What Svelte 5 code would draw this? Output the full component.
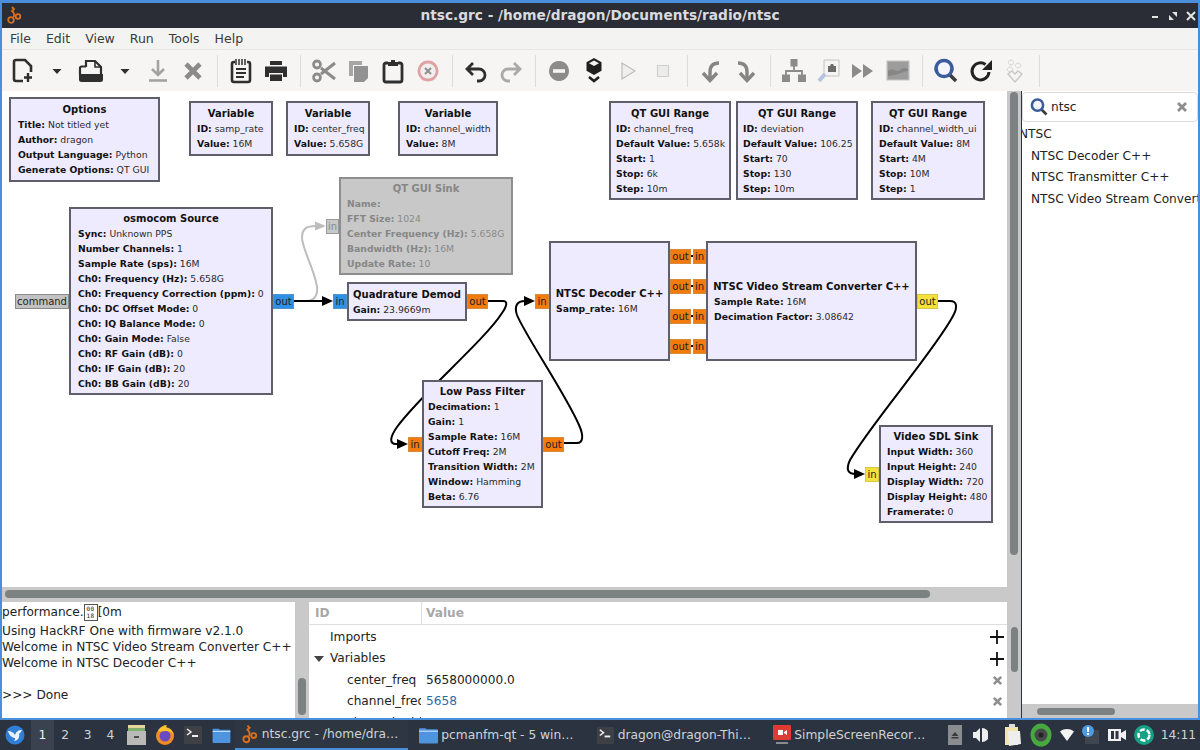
<script>
  const G = '#8b8b8b';
  const K = '#2f2f2f';

  // toolbar icons, drawn in a 24x24 box
  const tools = [
    { w: 34.5, paths: [
      { d: 'M12 22H5a2 2 0 0 1-2-2V3a2 2 0 0 1 2-2h9l6 6v6', s: K, sw: 2.6 },
      { d: 'M17 14v9M13 18.5h8', s: K, sw: 2.4 } ] },
    { w: 33, paths: [{ d: 'M7.5 10h9L12 15z', f: K }] },
    { w: 34.5, paths: [
      { d: 'M7 8V2h9l6 6v8', s: K, sw: 2.2 },
      { d: 'M16 2v6h6', s: K, sw: 1.6 },
      { d: 'M1 16V9a1.5 1.5 0 0 1 1.5-1.5H7', s: K, sw: 2.2 },
      { d: 'M0 15h24v5.5a2.5 2.5 0 0 1-2.5 2.5h-19A2.5 2.5 0 0 1 0 20.5z', f: K } ] },
    { w: 33, paths: [{ d: 'M7.5 10h9L12 15z', f: K }] },
    { w: 34.5, paths: [
      { d: 'M12 1v15M6 10l6 6 6-6', s: '#a3a3a3', sw: 2.6 },
      { d: 'M3 21.5h18', s: '#a3a3a3', sw: 2.6 } ] },
    { w: 34.5, paths: [{ d: 'M5 5l14 14M19 5L5 19', s: G, sw: 4.6 }] },
    'sep',
    { w: 34.5, paths: [
      { d: 'M6 3H5a2 2 0 0 0-2 2v16a2 2 0 0 0 2 2h14a2 2 0 0 0 2-2V5a2 2 0 0 0-2-2h-1', s: K, sw: 2.6 },
      { d: 'M7 0v6M10 0v6M13 0v6M16 0v6', s: K, sw: 1.5 },
      { d: 'M7 10h10M7 14h10M7 18h8', s: K, sw: 2 } ] },
    { w: 34.5, paths: [
      { d: 'M6 2h12v4H6zM1 7.5h22V18h-4v-4H5v4H1zM6 15.5h12V22H6z', f: K } ] },
    'sep',
    { w: 34.5, paths: [
      { d: 'M9 9L23 20M9 15L23 4', s: G, sw: 3 },
      { d: 'M5 2a3.5 3.5 0 1 0 .01 0M5 15a3.5 3.5 0 1 0 .01 0', s: G, sw: 2.8 } ] },
    { w: 34.5, paths: [
      { d: 'M2 2h13v4H6v11H2z', f: '#a6a6a6' },
      { d: 'M7 7h14v12l-4 4H7z', f: '#929292' } ] },
    { w: 34.5, paths: [
      { d: 'M7 4H5a2 2 0 0 0-2 2v15a2 2 0 0 0 2 2h14a2 2 0 0 0 2-2V6a2 2 0 0 0-2-2h-2', s: K, sw: 2.8 },
      { d: 'M7 7V3h3V1h4v2h3v4z', f: K } ] },
    { w: 34.5, paths: [
      { d: 'M12 3a9 9 0 1 0 .01 0', s: '#dfa3a6', sw: 2.8, f: '#f2eeee' },
      { d: 'M9 9l6 6M15 9l-6 6', s: '#8f8f8f', sw: 2 } ] },
    'sep',
    { w: 34.5, paths: [{ d: 'M9 4L3 10l6 6M3 10h12a6 6 0 0 1 0 12h-2', s: K, sw: 2.8 }] },
    { w: 34.5, paths: [{ d: 'M15 4l6 6-6 6M21 10H9a6 6 0 0 0 0 12h2', s: '#a9a9a9', sw: 2.8 }] },
    'sep',
    { w: 34.5, paths: [
      { d: 'M12 2a10 10 0 1 0 .01 0', f: G },
      { d: 'M6 10.2h12v3.6H6z', f: '#f5f5f5' } ] },
    { w: 34.5, paths: [
      { d: 'M12 -1l7.5 4.3v8.4L12 16l-7.5-4.3V3.3z', f: '#1f1f1f' },
      { d: 'M12 1.5l5 2.8-5 2.8-5-2.8z', f: '#f2f2f2' },
      { d: 'M7 18l5 4 5-4', s: '#1f1f1f', sw: 2.6 } ] },
    { w: 34.5, paths: [{ d: 'M6 4v16l13-8z', s: '#bcbcbc', sw: 1.2, f: '#efefef' }] },
    { w: 34.5, paths: [{ d: 'M6.5 6.5h11v11h-11z', s: '#cfcfcf', sw: 1.2, f: '#ececec' }] },
    'sep',
    { w: 34.5, paths: [
      { d: 'M20 4c-6 0-9 3-9 9v6', s: '#858585', sw: 3.4 },
      { d: 'M4 14l7 7.5 7-7.5', s: '#858585', sw: 3.4 } ] },
    { w: 34.5, paths: [
      { d: 'M4 4c6 0 9 3 9 9v6', s: '#858585', sw: 3.4 },
      { d: 'M6 14l7 7.5 7-7.5', s: '#858585', sw: 3.4 } ] },
    'sep',
    { w: 34.5, paths: [
      { d: 'M8.5 0h7v7.5h-7zM0 15.5h8V23H0zM16 15.5h8V23h-8z', f: G },
      { d: 'M12 7v5M4 16v-4h16v4', s: G, sw: 1.8 } ] },
    { w: 34.5, paths: [
      { d: 'M7 1h15v16H7z', s: '#c2c2c2', sw: 1, f: '#f4f4f4' },
      { d: 'M11 7h2l1-2h2l1 2h2v6h-8z', f: '#6b6b6b' },
      { d: 'M8 15l-6 7', s: '#b4c6de', sw: 4 } ] },
    { w: 34.5, paths: [{ d: 'M1 5v14l10-7zM12 5v14l10-7z', f: G }] },
    { w: 34.5, paths: [
      { d: 'M1 2h22v19H1z', s: '#c6c6c6', sw: 1.2, f: '#9c9c9c' },
      { d: 'M2 12c5-4 8 2 12-1s5-2 8-1v2c-6 1-14 5-20 5z', f: '#868686' } ] },
    'sep',
    { w: 34.5, paths: [
      { d: 'M15 15l7 7', s: '#3c3c3c', sw: 3.6 },
      { d: 'M10 1.5a8 8 0 1 0 .01 0', s: '#3b5b9c', sw: 3.4, f: '#f3f5fa' } ] },
    { w: 34.5, paths: [
      { d: 'M20 13a8.5 8.5 0 1 1-3.5-7.5', s: '#222', sw: 3 },
      { d: 'M23 1v10H13z', f: '#222' } ] },
    { w: 34.5, paths: [
      { d: 'M8 1a2.5 2.5 0 1 0 .01 0M15 4a2.5 2.5 0 1 0 .01 0M7 8a2.5 2.5 0 1 0 .01 0', s: '#d4d4d4', sw: 1 },
      { d: 'M5 15l4-3 3 3 3-3 4 3-7 8z', s: '#c8c8c8', sw: 1.4, f: '#f4f4f4' } ] },
    'sep'
  ];

  const blocks = [
    { x: 9, y: 97, w: 151, h: 85, pad: 9, title: 'Options', lines: [['Title', 'Not titled yet'], ['Author', 'dragon'], ['Output Language', 'Python'], ['Generate Options', 'QT GUI']] },
    { x: 189, y: 101, w: 84, h: 55, pad: 8, title: 'Variable', lines: [['ID', 'samp_rate'], ['Value', '16M']] },
    { x: 286, y: 101, w: 84, h: 55, pad: 8, title: 'Variable', lines: [['ID', 'center_freq'], ['Value', '5.658G']] },
    { x: 398, y: 101, w: 100, h: 55, pad: 8, title: 'Variable', lines: [['ID', 'channel_width'], ['Value', '8M']] },
    { x: 609, y: 101, w: 122, h: 99, pad: 7, title: 'QT GUI Range', lines: [['ID', 'channel_freq'], ['Default Value', '5.658k'], ['Start', '1'], ['Stop', '6k'], ['Step', '10m']] },
    { x: 736, y: 101, w: 122, h: 99, pad: 7, title: 'QT GUI Range', lines: [['ID', 'deviation'], ['Default Value', '106.25'], ['Start', '70'], ['Stop', '130'], ['Step', '10m']] },
    { x: 871, y: 101, w: 114, h: 99, pad: 8, title: 'QT GUI Range', lines: [['ID', 'channel_width_ui'], ['Default Value', '8M'], ['Start', '4M'], ['Stop', '10M'], ['Step', '1']] },
    { x: 339, y: 177, w: 174, h: 98, pad: 8, off: true, title: 'QT GUI Sink', lines: [['Name', ''], ['FFT Size', '1024'], ['Center Frequency (Hz)', '5.658G'], ['Bandwidth (Hz)', '16M'], ['Update Rate', '10']] },
    { x: 69, y: 207, w: 204, h: 188, pad: 9, title: 'osmocom Source', lines: [['Sync', 'Unknown PPS'], ['Number Channels', '1'], ['Sample Rate (sps)', '16M'], ['Ch0: Frequency (Hz)', '5.658G'], ['Ch0: Frequency Correction (ppm)', '0'], ['Ch0: DC Offset Mode', '0'], ['Ch0: IQ Balance Mode', '0'], ['Ch0: Gain Mode', 'False'], ['Ch0: RF Gain (dB)', '0'], ['Ch0: IF Gain (dB)', '20'], ['Ch0: BB Gain (dB)', '20']] },
    { x: 347, y: 282, w: 120, h: 39, pad: 6, title: 'Quadrature Demod', lines: [['Gain', '23.9669m']] },
    { x: 422, y: 380, w: 121, h: 128, pad: 6, title: 'Low Pass Filter', lines: [['Decimation', '1'], ['Gain', '1'], ['Sample Rate', '16M'], ['Cutoff Freq', '2M'], ['Transition Width', '2M'], ['Window', 'Hamming'], ['Beta', '6.76']] },
    { x: 549, y: 241, w: 121, h: 120, pad: 7, title: 'NTSC Decoder C++', lines: [['Samp_rate', '16M']] },
    { x: 706, y: 241, w: 211, h: 120, pad: 8, title: 'NTSC Video Stream Converter C++', lines: [['Sample Rate', '16M'], ['Decimation Factor', '3.08642']] },
    { x: 879, y: 425, w: 114, h: 98, pad: 8, title: 'Video SDL Sink', lines: [['Input Width', '360'], ['Input Height', '240'], ['Display Width', '720'], ['Display Height', '480'], ['Framerate', '0']] }
  ];

  const ports = [
    { x: 15, y: 294, w: 54, label: 'command', kind: 'msg' },
    { x: 273, y: 294, w: 21, label: 'out', kind: 'cplx' },
    { x: 326, y: 219, w: 13, label: 'in', kind: 'dis' },
    { x: 333, y: 294, w: 14, label: 'in', kind: 'cplx' },
    { x: 467, y: 294, w: 21, label: 'out', kind: 'flt' },
    { x: 408, y: 437, w: 14, label: 'in', kind: 'flt' },
    { x: 543, y: 437, w: 21, label: 'out', kind: 'flt' },
    { x: 535, y: 294, w: 14, label: 'in', kind: 'flt' },
    { x: 670, y: 249, w: 21, label: 'out', kind: 'flt' },
    { x: 670, y: 279, w: 21, label: 'out', kind: 'flt' },
    { x: 670, y: 309, w: 21, label: 'out', kind: 'flt' },
    { x: 670, y: 339, w: 21, label: 'out', kind: 'flt' },
    { x: 693, y: 249, w: 13, label: 'in', kind: 'flt' },
    { x: 693, y: 279, w: 13, label: 'in', kind: 'flt' },
    { x: 693, y: 309, w: 13, label: 'in', kind: 'flt' },
    { x: 693, y: 339, w: 13, label: 'in', kind: 'flt' },
    { x: 917, y: 294, w: 21, label: 'out', kind: 'byte' },
    { x: 865, y: 467, w: 14, label: 'in', kind: 'byte' }
  ];

  const tasks = [
    { text: 'ntsc.grc - /home/dra…', icon: 'gr', active: true },
    { text: 'pcmanfm-qt - 5 win…', icon: 'folder' },
    { text: 'dragon@dragon-Thi…', icon: 'term' },
    { text: 'SimpleScreenRecor…', icon: 'rec' }
  ];
</script>

{#snippet grLogo(size)}
  <svg width={size} height={size} viewBox="0 0 18 18" fill="none" stroke="#d9701f" stroke-width="1.8">
    <path d="M7 1l2 2-2 2 2 2" />
    <circle cx="6" cy="14" r="2.8" />
    <circle cx="13" cy="10.5" r="2.3" />
    <path d="M9 7v4" />
  </svg>
{/snippet}

{#snippet xIcon(size, color)}
  <svg width={size} height={size} viewBox="0 0 12 12"><path d="M2 2l8 8M10 2l-8 8" stroke={color} stroke-width="2.8" /></svg>
{/snippet}

{#snippet plusIcon()}
  <svg width="14" height="14" viewBox="0 0 14 14"><path d="M7 0v14M0 7h14" stroke="#111" stroke-width="1.8" /></svg>
{/snippet}

{#snippet termIcon(size)}
  <svg width={size} height={size} viewBox="0 0 18 18"><rect width="18" height="18" rx="1" fill="#3d4045" /><path d="M3 3l4 3-4 3" stroke="#eee" stroke-width="1.5" fill="none" /><path d="M8 10h6" stroke="#eee" stroke-width="2" /></svg>
{/snippet}

{#snippet folderIcon(w, h)}
  <svg width={w} height={h} viewBox="0 0 20 18"><path d="M0 3a1 1 0 0 1 1-1h6l1 1h11a1 1 0 0 1 1 1v13a1 1 0 0 1-1 1H1a1 1 0 0 1-1-1z" fill="#4f94df" /><path d="M0 5h20" stroke="#dcebfa" stroke-width="1" /></svg>
{/snippet}

<div class="window">
  <header class="titlebar">
    <span class="tlogo">{@render grLogo(18)}</span>
    <span class="ttext">ntsc.grc - /home/dragon/Documents/radio/ntsc</span>
    <span class="wbtns">
      <svg width="10" height="10" viewBox="0 0 10 10"><path d="M2 6h6" stroke="#e4e4e4" stroke-width="2" /></svg>
      <svg width="10" height="10" viewBox="0 0 10 10"><path d="M9 1v5L4 1zM1 9V4l5 5z" fill="#e4e4e4" /></svg>
      <svg width="10" height="10" viewBox="0 0 10 10"><path d="M1 1l8 8M9 1L1 9" stroke="#e4e4e4" stroke-width="2" /></svg>
    </span>
  </header>

  <nav class="menubar">
    <span>File</span><span>Edit</span><span>View</span><span>Run</span><span>Tools</span><span>Help</span>
  </nav>

  <div class="toolbar">
    {#each tools as t}
      {#if t === 'sep'}
        <i class="sep"></i>
      {:else}
        <span class="tool" style="width:{t.w}px">
          <svg width="24" height="24" viewBox="0 0 24 24" fill="none">
            {#each t.paths as p}
              <path d={p.d} fill={p.f || 'none'} stroke={p.s || 'none'} stroke-width={p.sw || 0} />
            {/each}
          </svg>
        </span>
      {/if}
    {/each}
  </div>

  <div class="main">
    <div class="leftcol">
      <div class="canvasrow">
        <div class="canvas">
          <svg class="wires" width="1005" height="496" viewBox="2 91 1005 496" fill="none">
            <path d="M294 301H306C316 301 319 293 316 282C312 265 303 250 302 238C302 229 306 226 316 226" stroke="#bdbdbd" stroke-width="2" />
            <path d="M315 221.5L326 226L315 230.5z" fill="#bdbdbd" />
            <path d="M294 301H323" stroke="#000" stroke-width="2" />
            <path d="M322 296L333 301L322 306z" fill="#000" />
            <path d="M488 301H503C508 301 507 306 502 313C485 340 420 395 397 427C390 437 389 444 396 444H399" stroke="#000" stroke-width="2" />
            <path d="M397 439L408 444L397 449z" fill="#000" />
            <path d="M564 443H577C583 443 584 436 579 425C565 393 525 335 517 315C514 306 517 301 525 301" stroke="#000" stroke-width="2" />
            <path d="M524 296L535 301L524 306z" fill="#000" />
            <path d="M938 301H950C957 301 958 307 953 316C935 350 870 425 850 460C846 469 847 474 856 474" stroke="#000" stroke-width="2" />
            <path d="M854 469L865 474L854 479z" fill="#000" />
            <path d="M691 256h2M691 286h2M691 316h2M691 346h2" stroke="#000" stroke-width="2" />
          </svg>

          {#each ports as p}
            <div class="port {p.kind}" style="left:{p.x - 2}px;top:{p.y - 91}px;width:{p.w}px">{p.label}</div>
          {/each}

          {#each blocks as b}
            <div class="block" class:off={b.off} style="left:{b.x - 2}px;top:{b.y - 91}px;width:{b.w}px;height:{b.h}px;padding-left:{b.pad - 2}px;padding-right:{b.pad - 2}px">
              <div class="btitle">{b.title}</div>
              {#each b.lines as l}
                <div class="bline"><b>{l[0]}:</b> {l[1]}</div>
              {/each}
            </div>
          {/each}
        </div>
        <div class="vscroll"><div class="vthumb"></div></div>
      </div>
      <div class="hscroll"><div class="hthumb"></div></div>

      <div class="lower">
        <div class="console">
          <div class="c1">performance.<span class="tofu"><span>00</span><span>18</span></span>[0m</div>
          <div>Using HackRF One with firmware v2.1.0</div>
          <div>Welcome in NTSC Video Stream Converter C++</div>
          <div>Welcome in NTSC Decoder C++</div>
          <div>&nbsp;</div>
          <div>&gt;&gt;&gt; Done</div>
        </div>
        <div class="cscroll"><div class="cthumb"></div></div>
        <div class="tree">
          <div class="thead">
            <div class="th idcol">ID</div>
            <div class="th">Value</div>
          </div>
          <div class="tbody">
            <div class="row"><span class="name l1">Imports</span><span class="act">{@render plusIcon()}</span></div>
            <div class="row"><i class="caret"></i><span class="name l1">Variables</span><span class="act">{@render plusIcon()}</span></div>
            <div class="row"><span class="name l2">center_freq</span><span class="val">5658000000.0</span><span class="act">{@render xIcon(11, '#8f8f8f')}</span></div>
            <div class="row"><span class="name l2">channel_freq</span><span class="val blue">5658</span><span class="act">{@render xIcon(11, '#8f8f8f')}</span></div>
            <div class="row"><span class="name l2">channel_width</span><span class="val blue">8000000</span><span class="act">{@render xIcon(11, '#8f8f8f')}</span></div>
          </div>
          <div class="tscroll"><div class="tthumb"></div></div>
        </div>
      </div>
    </div>

    <aside class="panel">
      <div class="search">
        <svg width="18" height="18" viewBox="0 0 24 24" fill="none"><path d="M15 15l7 7" stroke="#3c3c3c" stroke-width="3.6" /><circle cx="10" cy="9.5" r="7.5" stroke="#3b5b9c" stroke-width="3.4" fill="#f3f5fa" /></svg>
        <span class="q">ntsc</span>
        <span class="clear">{@render xIcon(12, '#8d8d8d')}</span>
      </div>
      <div class="list">
        <div class="cat">NTSC</div>
        <div class="item">NTSC Decoder C++</div>
        <div class="item">NTSC Transmitter C++</div>
        <div class="item">NTSC Video Stream Converter C++</div>
      </div>
      <div class="pscroll"><div class="pthumb"></div></div>
    </aside>
  </div>
</div>

<footer class="taskbar">
  <span class="start">
    <svg width="20" height="20" viewBox="0 0 20 20"><circle cx="10" cy="10" r="9.5" fill="#2f7fd6" /><path d="M3 6c3 0 5 1 7 4 1-3 3-5 7-5-1 2-2 3-3 4 1 3-1 7-5 7 1-1 1-2 1-3-3 0-6-3-7-7z" fill="#eaf3fc" /></svg>
  </span>
  <span class="desk on">1</span><span class="desk">2</span><span class="desk">3</span><span class="desk">4</span>
  <span class="launch">
    <svg width="19" height="20" viewBox="0 0 19 20"><path d="M1 0h17v3H1z" fill="#e4d69a" /><path d="M1 3h17v3H1z" fill="#7fae6f" /><path d="M0 6h19v14H0z" fill="#b9b9b7" /><path d="M7 11h5v2H7z" fill="#4b4b4b" /></svg>
  </span>
  <span class="launch">
    <svg width="20" height="20" viewBox="0 0 20 20"><circle cx="10" cy="11" r="9" fill="#f28b22" /><circle cx="10" cy="11" r="5.5" fill="#6a4bc4" /><path d="M3 6C5 1 10 0 12 0c-1 1-1 2 0 3 3 0 6 3 7 7-2-3-5-4-8-4-3 0-6 1-8 0z" fill="#f9c22e" /></svg>
  </span>
  <span class="launch">{@render termIcon(18)}</span>
  <span class="launch">{@render folderIcon(19, 16)}</span>

  <div class="tasks">
    {#each tasks as t}
      <div class="task" class:active={t.active}>
        <span class="ticon">
          {#if t.icon === 'gr'}
            {@render grLogo(20)}
          {:else if t.icon === 'folder'}
            {@render folderIcon(19, 18)}
          {:else if t.icon === 'term'}
            {@render termIcon(17)}
          {:else}
            <svg width="18" height="20" viewBox="0 0 18 20"><rect width="18" height="15" rx="1" fill="#df3b35" /><path d="M5 5h5v5H5zM11 7l3-2v5l-3-2z" fill="#fff" /><path d="M3 18h12" stroke="#aaa" stroke-width="1.5" /></svg>
          {/if}
        </span>
        <span class="ttl">{t.text}</span>
      </div>
    {/each}
  </div>

  <div class="tray">
    <span class="eject"><svg width="8" height="8" viewBox="0 0 8 8"><path d="M4 1l3.5 4h-7zM.5 6h7v1.5h-7z" fill="#3a3a3a" /></svg></span>
    <span class="cell w38"><svg width="15" height="16" viewBox="0 0 15 16"><path d="M0 5h3l4-4v14l-4-4H0z" fill="#eee" /><path d="M9 1a7 7 0 0 1 0 14z" fill="#eee" /></svg></span>
    <span class="cell w26"><svg width="17" height="22" viewBox="0 0 17 22"><path d="M1 3h13v18H1z" fill="#f2e7a6" /><path d="M5 0h6v4H5z" fill="#ddd" /><path d="M4 7h12l1 13-12 2z" fill="#eee" /></svg></span>
    <span class="cell w30"><svg width="22" height="24" viewBox="0 0 22 24"><ellipse cx="11" cy="12" rx="10.5" ry="11.5" fill="#46a83f" /><circle cx="11" cy="12" r="6.5" fill="#45494a" /><circle cx="11" cy="12" r="2.5" fill="#222" /></svg></span>
    <span class="cell w22"><svg width="14" height="12" viewBox="0 0 14 12"><path d="M0 2.5C4-.8 10-.8 14 2.5L7 12z" fill="#f4f4f4" /></svg></span>
    <span class="cell w24"><svg width="18" height="20" viewBox="0 0 18 20"><path d="M4 5h14v14H4z" fill="#3f4650" /><circle cx="7" cy="6" r="6" fill="#4f9be3" /><path d="M6 2h2v5H6zM6 8h2v2H6z" fill="#fff" /></svg></span>
    <span class="cell w30"><svg width="18" height="12" viewBox="0 0 18 12"><path d="M0 0h13v12H0z" fill="#f2f2f2" /><path d="M3 2h3v8H3zM7.5 2h3v8h-3z" fill="#2d3540" /><path d="M13 4l5-3v10l-5-3z" fill="#f2f2f2" /></svg></span>
    <span class="cell w24"><svg width="20" height="20" viewBox="0 0 20 20"><circle cx="10" cy="10" r="10" fill="#16a085" /><circle cx="10" cy="10" r="5.5" fill="none" stroke="#fff" stroke-width="2.5" stroke-dasharray="5 2" /></svg></span>
    <span class="clock">14:11</span>
  </div>
</footer>

<style>
  :global(body) {
    margin: 0;
    background: #2b3340;
    font-family: "DejaVu Sans", sans-serif;
  }

  .window {
    height: 720px;
    box-sizing: border-box;
    border: 2px solid #4a8fdb;
    border-top-width: 3px;
    display: flex;
    flex-direction: column;
    overflow: hidden;
  }

  .titlebar {
    height: 25px;
    flex: none;
    background: #2a2d36;
    display: flex;
    align-items: center;
    justify-content: center;
    position: relative;
    color: #d9dbde;
    font-size: 13.7px;
    font-weight: 700;
    padding-bottom: 2px;
    box-sizing: border-box;
  }

  .tlogo {
    position: absolute;
    left: 3px;
    top: 3px;
  }

  .wbtns {
    position: absolute;
    right: 2px;
    top: 8px;
    display: flex;
    gap: 8px;
  }

  .menubar {
    height: 22px;
    flex: none;
    background: #f3f3f2;
    display: flex;
    align-items: center;
    gap: 15px;
    padding-left: 8px;
    font-size: 12.5px;
    color: #3a3a3a;
    border-bottom: 1px solid #e6e6e5;
    box-sizing: border-box;
  }

  .toolbar {
    height: 41px;
    flex: none;
    box-sizing: border-box;
    background: #f6f5f4;
    display: flex;
    align-items: center;
    padding-left: 4px;
    padding-top: 1px;
  }

  .tool {
    display: flex;
    justify-content: center;
    flex: none;
  }

  .tool svg {
    overflow: visible;
    display: block;
  }

  .sep {
    width: 1px;
    height: 32px;
    background: #dcdcdb;
    margin: 0 6.5px;
    flex: none;
  }

  .main {
    flex: 1;
    display: flex;
    min-height: 0;
  }

  .leftcol {
    width: 1019px;
    flex: none;
    display: flex;
    flex-direction: column;
  }

  .canvasrow {
    height: 496px;
    flex: none;
    display: flex;
  }

  .canvas {
    width: 1005px;
    flex: none;
    background: #fff;
    position: relative;
    overflow: hidden;
  }

  .wires {
    position: absolute;
    left: 0;
    top: 0;
  }

  .block {
    position: absolute;
    box-sizing: border-box;
    border: 2px solid #5f5f6b;
    background: #eeebfe;
    color: #2a2a2a;
    display: flex;
    flex-direction: column;
    justify-content: center;
    font-size: 9.25px;
    line-height: 15px;
    white-space: nowrap;
    overflow: hidden;
  }

  .block.off {
    background: #c8c8c8;
    border-color: #8e8e8e;
    color: #8a8a8a;
  }

  .btitle {
    font-size: 10px;
    font-weight: 700;
    text-align: center;
    line-height: 15px;
    color: #111;
    margin: 0 -8px;
  }

  .off .btitle {
    color: #868686;
  }

  .bline b {
    color: #111;
  }

  .off .bline b {
    color: #868686;
  }

  .port {
    position: absolute;
    box-sizing: border-box;
    height: 15px;
    font-size: 10px;
    line-height: 13px;
    text-align: center;
    border: 1px solid #8a8a8a;
    color: #222;
    overflow: hidden;
  }

  .port.msg { background: #c2c2c2; }
  .port.cplx { background: #2f8fe6; border-color: #4f93cf; }
  .port.flt { background: #f37a0c; border-color: #d88a3c; }
  .port.byte { background: #f4e23a; border-color: #d6c64a; }
  .port.dis { background: #c8c8c8; border-color: #9a9a9a; color: #8a8a8a; }

  .vscroll {
    width: 14px;
    flex: none;
    background: #c9c9c9;
    position: relative;
  }

  .vthumb {
    position: absolute;
    left: 3px;
    right: 3px;
    top: 1px;
    height: 463px;
    background: #7c8282;
    border-radius: 4px;
  }

  .hscroll {
    height: 15px;
    flex: none;
    background: #c9c9c9;
    position: relative;
  }

  .hthumb {
    position: absolute;
    left: 3px;
    width: 925px;
    top: 3px;
    height: 8px;
    background: #7c8282;
    border-radius: 4px;
  }

  .lower {
    flex: 1;
    display: flex;
    min-height: 0;
    font-size: 12.15px;
    color: #222;
  }

  .console {
    width: 293px;
    flex: none;
    box-sizing: border-box;
    background: #fff;
    line-height: 16px;
    white-space: nowrap;
    overflow: hidden;
    padding-top: 1px;
  }

  .c1 {
    height: 20px;
    line-height: 19px;
  }

  .tofu {
    display: inline-flex;
    flex-direction: column;
    box-sizing: border-box;
    width: 14px;
    height: 17px;
    border: 1px solid #555;
    font-size: 6px;
    line-height: 7px;
    text-align: center;
    vertical-align: middle;
    font-family: "DejaVu Sans Mono", monospace;
    letter-spacing: 0.5px;
  }

  .cscroll {
    width: 14px;
    flex: none;
    background: #c9c9c9;
    position: relative;
  }

  .cthumb {
    position: absolute;
    left: 3px;
    right: 3px;
    top: 76px;
    height: 37px;
    background: #7c8282;
    border-radius: 4px;
  }

  .tree {
    flex: 1;
    position: relative;
    background: #fff;
    overflow: hidden;
  }

  .thead {
    height: 22px;
    display: flex;
    border-bottom: 1px solid #dedede;
  }

  .th {
    color: #a8a8a8;
    font-weight: 700;
    line-height: 22px;
    padding-left: 4px;
  }

  .th.idcol {
    width: 106px;
    padding-left: 6px;
    border-right: 1px solid #dedede;
  }

  .tbody {
    padding-top: 1.5px;
  }

  .row {
    height: 21.5px;
    line-height: 21.5px;
    display: flex;
    position: relative;
    white-space: nowrap;
  }

  .name {
    overflow: hidden;
    flex: none;
    box-sizing: border-box;
  }

  .name.l1 {
    padding-left: 21px;
    width: 113px;
  }

  .name.l2 {
    padding-left: 38px;
    width: 112px;
  }

  .caret {
    position: absolute;
    left: 5px;
    top: 8px;
    border-style: solid;
    border-width: 6px 5px 0;
    border-color: #444 transparent transparent;
  }

  .val {
    padding-left: 5px;
  }

  .blue {
    color: #2f6aa8;
  }

  .act {
    position: absolute;
    left: 681px;
    top: 0;
    width: 14px;
    height: 100%;
    display: flex;
    align-items: center;
    justify-content: center;
  }

  .tscroll {
    position: absolute;
    right: 0;
    top: 0;
    bottom: 0;
    width: 14px;
    background: #c9c9c9;
  }

  .tthumb {
    position: absolute;
    left: 4px;
    width: 7px;
    top: 25px;
    height: 45px;
    background: #7c8282;
    border-radius: 4px;
  }

  .panel {
    margin-left: 1px;
    flex: 1;
    background: #fff;
    display: flex;
    flex-direction: column;
    font-size: 12.15px;
    color: #222;
    min-width: 0;
    overflow: hidden;
  }

  .search {
    height: 30px;
    box-sizing: border-box;
    margin-top: 1px;
    flex: none;
    border: 1px solid #dcdcdc;
    border-radius: 4px;
    display: flex;
    align-items: center;
    padding-left: 7px;
    gap: 3px;
    position: relative;
  }

  .clear {
    position: absolute;
    right: 9px;
    top: 8px;
  }

  .list {
    flex: 1;
    padding-top: 2px;
    white-space: nowrap;
    overflow: hidden;
    line-height: 21.5px;
  }

  .cat {
    margin-left: -3px;
  }

  .item {
    padding-left: 9px;
  }

  .pscroll {
    height: 14px;
    flex: none;
    background: #c9c9c9;
    position: relative;
  }

  .pthumb {
    position: absolute;
    left: 15px;
    width: 78px;
    top: 4px;
    height: 7px;
    background: #7c8282;
    border-radius: 4px;
  }

  .taskbar {
    height: 30px;
    background: #2b3340;
    display: flex;
    align-items: center;
    color: #cfd3d8;
    font-size: 12.25px;
    overflow: hidden;
  }

  .start {
    width: 31px;
    flex: none;
    display: flex;
    justify-content: center;
    padding-right: 1px;
    box-sizing: border-box;
  }

  .desk {
    width: 22.7px;
    height: 30px;
    flex: none;
    line-height: 30px;
    text-align: center;
  }

  .desk.on {
    background: #3a424f;
    color: #f0f0f0;
  }

  .launch {
    width: 28.5px;
    flex: none;
    display: flex;
    justify-content: center;
  }

  .tasks {
    display: flex;
    margin-left: -1px;
    flex: none;
  }

  .task {
    width: 176.5px;
    height: 30px;
    box-sizing: border-box;
    flex: none;
    display: flex;
    align-items: center;
    padding-left: 8px;
    gap: 3px;
    white-space: nowrap;
    overflow: hidden;
  }

  .task.active {
    border-bottom: 2px solid #4a8fdb;
    width: 173px;
    margin-right: 3.5px;
    background: #2e3642;
    padding-left: 5px;
  }

  .ticon {
    width: 19px;
    flex: none;
    display: flex;
    justify-content: center;
  }

  .tray {
    display: flex;
    align-items: center;
    margin-left: 7px;
    flex: none;
  }

  .eject {
    width: 14px;
    height: 20px;
    background: #8a8d90;
    display: flex;
    align-items: center;
    justify-content: center;
  }

  .cell {
    display: flex;
    justify-content: center;
    flex: none;
  }

  .w38 { width: 38px; }
  .w30 { width: 30px; }
  .w26 { width: 26px; }
  .w24 { width: 24px; }
  .w22 { width: 22px; }

  .clock {
    margin-left: 5px;
  }
</style>
